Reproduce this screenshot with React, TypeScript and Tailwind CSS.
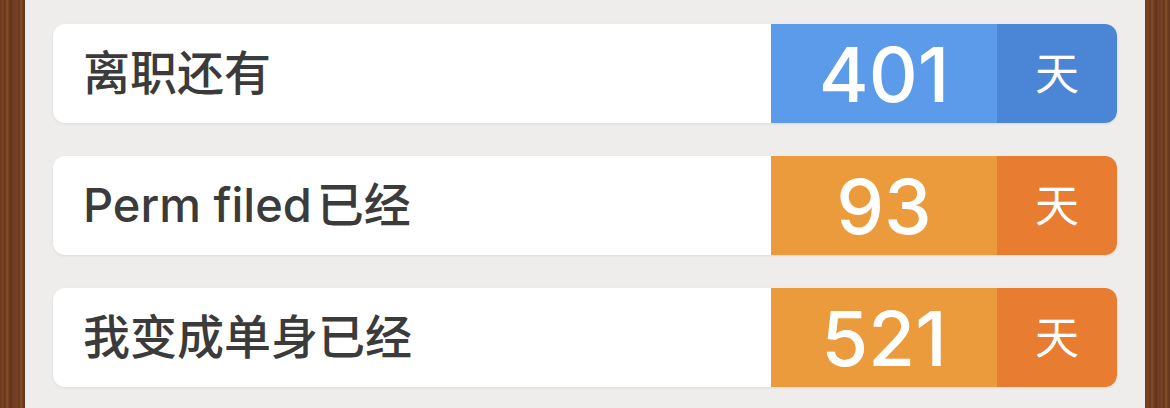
import React from 'react'

const rows = [
  { label: 'Perm filed', suffix: '已经', value: 93, tone: 'orange' },
]

const allRows = [
  { label: '离职还有', suffix: '', value: 401, tone: 'blue' },
  ...rows,
  { label: '我变成单身已经', suffix: '', value: 521, tone: 'orange' },
]

function Wood() {
  return (
    <div className="h-full w-[25px] shrink-0 bg-[#6e3d1f] bg-[repeating-linear-gradient(90deg,#6d3a1f_0px,#7a4326_3px,#663519_5px,#83502f_7px,#6f3c20_9px,#61321a_11px,#77432a_14px)]" />
  )
}

function CounterRow({
  label,
  suffix,
  value,
  tone,
}: {
  label: string
  suffix: string
  value: number
  tone: string
}) {
  const blue = tone === 'blue'
  return (
    <div className="flex h-[99px] overflow-hidden rounded-[12px] bg-white shadow-[0_1px_3px_rgba(0,0,0,0.08)]">
      <div className="flex flex-1 items-center pl-[30px] text-[47px] font-medium text-[#3b3b3b]">
        {label}
        {suffix && <span className="ml-[5px]">{suffix}</span>}
      </div>
      <div
        className={`flex w-[226px] items-center justify-center text-[76px] font-medium text-white ${
          blue ? 'bg-[#5b9bea]' : 'bg-[#eb9a3c]'
        }`}
      >
        {value}
      </div>
      <div
        className={`flex w-[120px] items-center justify-center text-[44px] text-white ${
          blue ? 'bg-[#4a85d6]' : 'bg-[#e87c31]'
        }`}
      >
        天
      </div>
    </div>
  )
}

export default function App() {
  return (
    <div
      className="flex h-[408px] w-[1170px] overflow-hidden"
      style={{ fontFamily: 'Inter, "Noto Sans CJK SC", sans-serif' }}
    >
      <Wood />
      <div className="flex flex-1 flex-col gap-[33px] bg-[#efedeb] pl-[28px] pr-[28px] pt-[24px]">
        {allRows.map((r) => (
          <CounterRow key={r.label} {...r} />
        ))}
      </div>
      <Wood />
    </div>
  )
}
